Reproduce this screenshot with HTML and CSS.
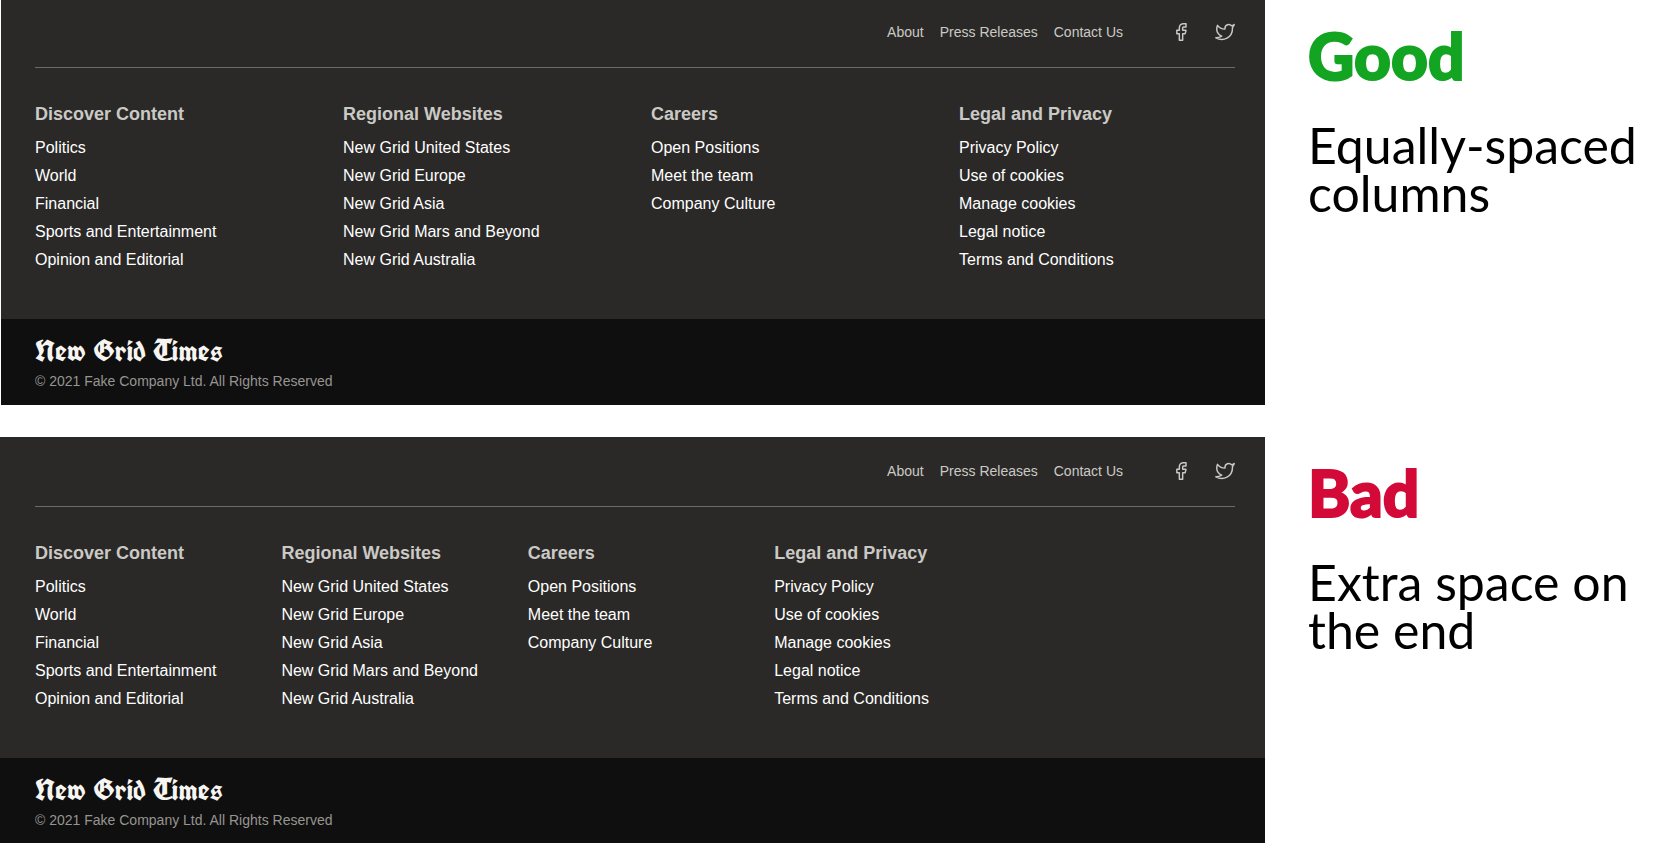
FILE: index.html
```html
<!DOCTYPE html>
<html lang="en">
<head>
<meta charset="utf-8">
<meta name="viewport" content="width=device-width, initial-scale=1">
<title>Footer columns</title>
<link rel="stylesheet" href="styles.css">
</head>
<body>
<svg class="sprite" aria-hidden="true">
  <symbol id="facebook" viewBox="0 0 24 24"><path d="M18 2h-3a5 5 0 0 0-5 5v3H7v4h3v8h4v-8h3l1-4h-4V7a1 1 0 0 1 1-1h3z"/></symbol>
  <symbol id="twitter" viewBox="0 0 24 24"><path d="M23 3a10.900 10.900 0 0 1-3.140 1.530 4.480 4.480 0 0 0-7.860 3v1A10.660 10.660 0 0 1 3 4s-4 9 5 13a11.640 11.640 0 0 1-7 2c9 5 20 0 20-11.500a4.500 4.500 0 0 0-.08-.83A7.720 7.720 0 0 0 23 3z"/></symbol>
</svg>
<main>
  <section class="example example-good">
    <footer class="footer">
      <div class="main">
        <nav class="top">
          <a href="#">About</a>
          <a href="#">Press Releases</a>
          <a href="#">Contact Us</a>
          <div class="social">
            <a href="#" aria-label="Facebook"><svg><use href="#facebook"/></svg></a>
            <a href="#" aria-label="Twitter"><svg><use href="#twitter"/></svg></a>
          </div>
        </nav>
        <div class="columns">
          <nav><h2>Discover Content</h2><ul>
            <li><a href="#">Politics</a></li><li><a href="#">World</a></li><li><a href="#">Financial</a></li><li><a href="#">Sports and Entertainment</a></li><li><a href="#">Opinion and Editorial</a></li>
          </ul></nav>
          <nav><h2>Regional Websites</h2><ul>
            <li><a href="#">New Grid United States</a></li><li><a href="#">New Grid Europe</a></li><li><a href="#">New Grid Asia</a></li><li><a href="#">New Grid Mars and Beyond</a></li><li><a href="#">New Grid Australia</a></li>
          </ul></nav>
          <nav><h2>Careers</h2><ul>
            <li><a href="#">Open Positions</a></li><li><a href="#">Meet the team</a></li><li><a href="#">Company Culture</a></li>
          </ul></nav>
          <nav><h2>Legal and Privacy</h2><ul>
            <li><a href="#">Privacy Policy</a></li><li><a href="#">Use of cookies</a></li><li><a href="#">Manage cookies</a></li><li><a href="#">Legal notice</a></li><li><a href="#">Terms and Conditions</a></li>
          </ul></nav>
        </div>
      </div>
      <div class="bottom">
        <p class="logo">New Grid Times</p>
        <p class="copyright">© 2021 Fake Company Ltd. All Rights Reserved</p>
      </div>
    </footer>
    <div class="verdict">
      <h1>Good</h1>
      <p>Equally-spaced columns</p>
    </div>
  </section>

  <section class="example example-bad">
    <footer class="footer">
      <div class="main">
        <nav class="top">
          <a href="#">About</a>
          <a href="#">Press Releases</a>
          <a href="#">Contact Us</a>
          <div class="social">
            <a href="#" aria-label="Facebook"><svg><use href="#facebook"/></svg></a>
            <a href="#" aria-label="Twitter"><svg><use href="#twitter"/></svg></a>
          </div>
        </nav>
        <div class="columns">
          <nav><h2>Discover Content</h2><ul>
            <li><a href="#">Politics</a></li><li><a href="#">World</a></li><li><a href="#">Financial</a></li><li><a href="#">Sports and Entertainment</a></li><li><a href="#">Opinion and Editorial</a></li>
          </ul></nav>
          <nav><h2>Regional Websites</h2><ul>
            <li><a href="#">New Grid United States</a></li><li><a href="#">New Grid Europe</a></li><li><a href="#">New Grid Asia</a></li><li><a href="#">New Grid Mars and Beyond</a></li><li><a href="#">New Grid Australia</a></li>
          </ul></nav>
          <nav><h2>Careers</h2><ul>
            <li><a href="#">Open Positions</a></li><li><a href="#">Meet the team</a></li><li><a href="#">Company Culture</a></li>
          </ul></nav>
          <nav><h2>Legal and Privacy</h2><ul>
            <li><a href="#">Privacy Policy</a></li><li><a href="#">Use of cookies</a></li><li><a href="#">Manage cookies</a></li><li><a href="#">Legal notice</a></li><li><a href="#">Terms and Conditions</a></li>
          </ul></nav>
        </div>
      </div>
      <div class="bottom">
        <p class="logo">New Grid Times</p>
        <p class="copyright">© 2021 Fake Company Ltd. All Rights Reserved</p>
      </div>
    </footer>
    <div class="verdict">
      <h1>Bad</h1>
      <p>Extra space on the end</p>
    </div>
  </section>
</main>
</body>
</html>
```

FILE: styles.css
```css
* { box-sizing: border-box; }
body {
  margin: 0;
  background: #fff;
  font-family: "Liberation Sans", Arial, sans-serif;
}
h1, h2, p, ul { margin: 0; padding: 0; }
ul { list-style: none; }
a { color: inherit; text-decoration: none; }
.sprite { display: none; }

main { display: grid; gap: 32px; }
.example {
  display: grid;
  grid-template-columns: minmax(0, 1fr) 408px;
}
.example-good { padding-left: 1px; }

.main {
  background: #2a2927;
  padding: 20px 30px 45px 34px;
}
.example-bad .main { padding-top: 22px; padding-left: 35px; }
.top {
  display: flex;
  justify-content: flex-end;
  align-items: center;
  gap: 16px;
  padding-bottom: 23px;
  border-bottom: 1px solid #6c6a68;
  color: #cbc9c5;
  font-size: 14px;
  line-height: 24px;
}
.social {
  display: flex;
  gap: 24px;
  margin-left: 32px;
}
.social a { display: flex; }
.social svg {
  width: 20px;
  height: 24px;
  fill: none;
  stroke: currentColor;
  stroke-width: 1.75;
  stroke-linejoin: round;
}
.columns {
  display: grid;
  grid-template-columns: repeat(4, 1fr);
  gap: 32px;
  padding-top: 34px;
}
.example-bad .columns { grid-template-columns: repeat(5, 1fr); }
.columns h2 {
  margin-bottom: 8px;
  color: #cbc9c5;
  font-size: 18px;
  line-height: 24px;
}
.columns li {
  color: #fff;
  font-size: 16px;
  line-height: 28px;
  white-space: nowrap;
}

.bottom {
  background: #0f0f0f;
  padding: 16px 34px 14px;
}
.example-bad .bottom { padding-left: 35px; padding-bottom: 13px; }
.logo {
  color: #f7f5f2;
  font-family: Chomsky, "Old English Text MT", "UnifrakturCook", "Liberation Serif", serif;
  font-size: 30px;
  font-weight: 700;
  line-height: 32px;
}
.copyright {
  padding-top: 4px;
  color: #979592;
  font-size: 14px;
  line-height: 20px;
}

.verdict {
  padding: 25px 24px 0 43px;
  font-family: Lato, sans-serif;
}
.verdict h1 {
  color: #13a422;
  font-size: 64px;
  font-weight: 900;
  line-height: 62px;
  -webkit-text-stroke: 2px currentColor;
}
.example-bad h1 { color: #d30a37; }
.verdict p {
  margin-top: 34px;
  color: #000;
  font-size: 50px;
  line-height: 48px;
}
```
